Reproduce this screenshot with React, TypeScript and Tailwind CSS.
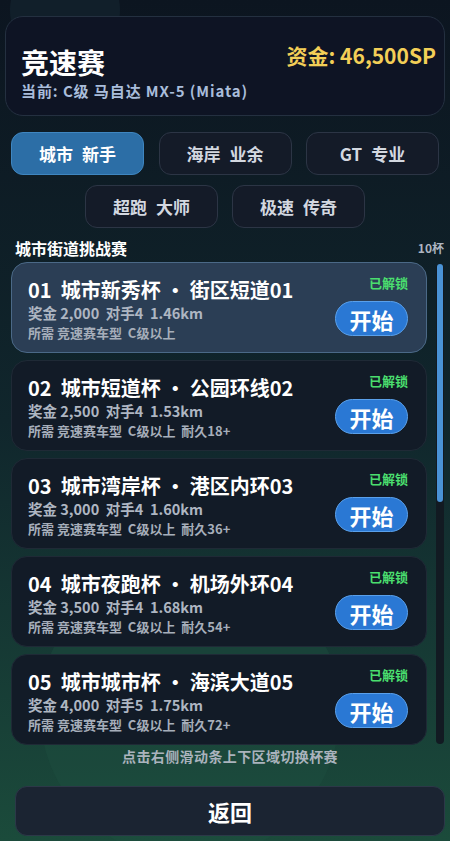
import React from "react";

type Cup = {
  no: string;
  name: string;
  track: string;
  prize: string;
  rivals: number;
  km: string;
  durability?: number;
};

const cups: Cup[] = [
  { no: "01", name: "城市新秀杯", track: "街区短道01", prize: "2,000", rivals: 4, km: "1.46km" },
  { no: "02", name: "城市短道杯", track: "公园环线02", prize: "2,500", rivals: 4, km: "1.53km", durability: 18 },
  { no: "03", name: "城市湾岸杯", track: "港区内环03", prize: "3,000", rivals: 4, km: "1.60km", durability: 36 },
  { no: "04", name: "城市夜跑杯", track: "机场外环04", prize: "3,500", rivals: 4, km: "1.68km", durability: 54 },
  { no: "05", name: "城市城市杯", track: "海滨大道05", prize: "4,000", rivals: 5, km: "1.75km", durability: 72 },
];

const font = { fontFamily: '"Noto Sans CJK SC", "Noto Sans", sans-serif' };

function Tab({ a, b, active }: { a: string; b: string; active?: boolean }) {
  return (
    <button
      type="button"
      className={
        active
          ? "flex h-[43px] w-[133px] items-center justify-center gap-[9px] rounded-xl border border-[#3f86c0] bg-[#2c6ea6] text-[17px] font-bold text-white"
          : "flex h-[43px] w-[133px] items-center justify-center gap-[9px] rounded-xl border border-[#2c3545] bg-[#141b28] text-[17px] font-bold text-[#d3d8e0]"
      }
    >
      <span>{a}</span>
      <span>{b}</span>
    </button>
  );
}

function CupCard({ cup, active }: { cup: Cup; active?: boolean }) {
  return (
    <div
      className={
        active
          ? "flex h-[91px] shrink-0 rounded-2xl border border-[#4b6987] bg-[#2b3e55] pl-4 pr-[18px]"
          : "flex h-[91px] shrink-0 rounded-2xl border border-[#1f2a36] bg-[#121b27] pl-4 pr-[18px]"
      }
    >
      <div className="flex flex-1 flex-col pt-[14px]">
        <p className="whitespace-nowrap text-[20px] font-bold leading-[26px] text-white">
          {cup.no}&nbsp;&nbsp;{cup.name}&nbsp;・&nbsp;{cup.track}
        </p>
        <p className="whitespace-nowrap text-[14.5px] font-bold leading-[19px] text-[#aeb6c2]">
          奖金 {cup.prize}&nbsp;&nbsp;对手{cup.rivals}&nbsp;&nbsp;{cup.km}
        </p>
        <p className="mt-[3px] whitespace-nowrap text-[13px] font-semibold leading-4 text-[#a6aeba]">
          所需 竞速赛车型&nbsp;&nbsp;C级以上
          {cup.durability ? <>&nbsp;&nbsp;耐久{cup.durability}+</> : null}
        </p>
      </div>
      <div className="flex flex-col items-end pt-[11px]">
        <span className="text-[13px] font-bold leading-[18px] text-[#4ade6e]">已解锁</span>
        <button
          type="button"
          className="mt-[9px] h-[35px] w-[73px] rounded-full border border-[#5aa0ea] bg-[#2a78d4] text-[22px] font-bold leading-none text-white"
        >
          开始
        </button>
      </div>
    </div>
  );
}

export default function App() {
  return (
    <div
      className="relative h-[841px] w-[450px] overflow-hidden bg-gradient-to-b from-[#0c1520] via-[#10262c] to-[#1b4b3b]"
      style={font}
    >
      <div className="pointer-events-none absolute -top-[40px] left-[10px] h-[100px] w-[110px] rounded-full bg-[#14232f] opacity-70" />
      <div className="pointer-events-none absolute left-[40px] top-[560px] h-[300px] w-[300px] rounded-full bg-[#1d5040] opacity-40" />

      <div className="relative flex flex-col px-[5px] pt-4">
        <div className="flex h-[100px] justify-between rounded-[18px] border border-[#243040] bg-[#0e1424] pl-[15px] pr-2">
          <div className="flex flex-col pt-[27px]">
            <h1 className="text-[28px] font-bold leading-[36px] text-white">竞速赛</h1>
            <p className="mt-[2px] text-[15px] font-bold leading-[18px] tracking-[0.9px] text-[#a9bddb]">
              当前: C级 马自达 MX-5 (Miata)
            </p>
          </div>
          <div className="pt-[24px] text-[21px] font-bold leading-[28px] text-[#f3cf57]">
            资金: 46,500SP
          </div>
        </div>

        <div className="mt-4 flex flex-col items-center gap-[10px] px-[6px]">
          <div className="flex w-full justify-between">
            <Tab a="城市" b="新手" active />
            <Tab a="海岸" b="业余" />
            <Tab a="GT" b="专业" />
          </div>
          <div className="flex gap-[14px]">
            <Tab a="超跑" b="大师" />
            <Tab a="极速" b="传奇" />
          </div>
        </div>

        <div className="mt-[10px] flex items-center justify-between pl-[10px] pr-[1px]">
          <span className="text-[16px] font-bold leading-5 text-white">城市街道挑战赛</span>
          <span className="text-[12px] font-bold text-[#aeb6c2]">10杯</span>
        </div>

        <div className="mt-[4px] flex gap-[9px] pl-[6px]">
          <div className="flex w-[416px] flex-col gap-[7px]">
            {cups.map((cup, i) => (
              <CupCard key={cup.no} cup={cup} active={i === 0} />
            ))}
          </div>
          <div className="relative mt-[2px] h-[480px] w-[8px] rounded-full bg-[#121a22]">
            <div className="absolute left-[1px] top-0 h-[238px] w-[6px] rounded-full bg-[#4a93d6]" />
          </div>
        </div>

        <p className="mt-[1px] pl-[10px] text-center text-[14px] font-bold leading-5 tracking-[0.4px] text-[#aab3bd]">
          点击右侧滑动条上下区域切换杯赛
        </p>

        <button
          type="button"
          className="ml-[10px] mt-[20px] h-[50px] w-[430px] rounded-xl border border-[#2c3848] bg-[#1b2432] text-[22px] font-bold text-white"
        >
          返回
        </button>
      </div>
    </div>
  );
}
